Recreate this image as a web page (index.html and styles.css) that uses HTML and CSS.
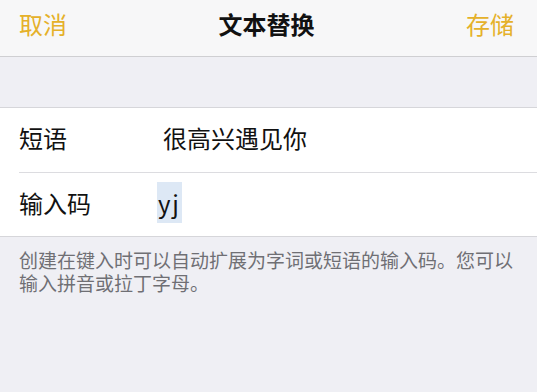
FILE: index.html
```html
<!DOCTYPE html>
<html lang="zh-CN">
<head>
    <meta charset="UTF-8">
    <meta name="viewport" content="width=device-width, initial-scale=1.0">
    <title>文本替换</title>
    <link rel="stylesheet" href="styles.css">
</head>
<body>
    <div class="nav-bar">
        <a class="nav-btn">取消</a>
        <h1 class="nav-title">文本替换</h1>
        <a class="nav-btn">存储</a>
    </div>
    <div class="spacer"></div>
    <div class="form-group">
        <div class="form-row">
            <span class="label">短语</span>
            <span class="value">很高兴遇见你</span>
        </div>
        <div class="form-row">
            <span class="label">输入码</span>
            <span class="value"><span class="selected">yj</span></span>
        </div>
    </div>
    <p class="footnote">创建在键入时可以自动扩展为字词或短语的输入码。您可以输入拼音或拉丁字母。</p>
</body>
</html>
```

FILE: styles.css
```css
body {
    margin: 0;
    background: #efeff4;
    font-family: "Noto Sans CJK SC", "Noto Sans", sans-serif;
    height: 100vh;
    overflow: hidden;
}
.nav-bar {
    height: 57px;
    background: #f7f7f8;
    border-bottom: 1px solid #cfcfd2;
    display: flex;
    align-items: center;
    justify-content: space-between;
    padding: 0 23px 9px 19px;
    box-sizing: border-box;
}
.nav-btn {
    font-size: 24px;
    color: #e5b12a;
    text-decoration: none;
}
.nav-title {
    margin: 0;
    font-size: 24px;
    font-weight: bold;
    color: #111;
}
.spacer {
    height: 50px;
    border-bottom: 1px solid #d6d6da;
}
.form-group {
    background: #fff;
    border-bottom: 1px solid #d6d6da;
    padding-left: 19px;
}
.form-row {
    height: 64px;
    box-sizing: border-box;
    padding-bottom: 5px;
    display: flex;
    align-items: center;
    font-size: 24px;
    color: #111;
}
.form-row + .form-row {
    border-top: 1px solid #dcdce0;
}
.label {
    width: 144px;
}
.selected {
    background: #dde8f5;
    padding: 3px 1px 3px 1px;
    margin-left: -6px;
    letter-spacing: 2px;
}
.footnote {
    margin: 11px 19px 0 19px;
    font-size: 19px;
    line-height: 23px;
    color: #6f6f74;
}
```
